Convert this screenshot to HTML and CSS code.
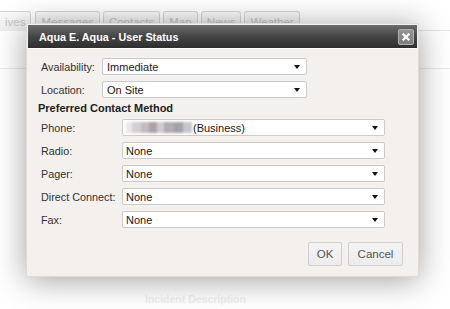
FILE: index.html
```html
<!DOCTYPE html>
<html>
<head>
<meta charset="utf-8">
<link rel="stylesheet" href="styles.css">
</head>
<body>
<div class="page">
  <div class="tabs">
    <div class="tab tab-first">ives</div>
    <div class="tab">Messages</div>
    <div class="tab">Contacts</div>
    <div class="tab">Map</div>
    <div class="tab">News</div>
    <div class="tab">Weather</div>
  </div>
  <div class="rule"></div>
  <div class="incident">Incident Description</div>

  <div class="dialog">
    <div class="titlebar">
      <span class="title">Aqua E. Aqua - User Status</span>
      <span class="close">
        <svg width="10" height="10" viewBox="0 0 10 10"><path d="M2.5 2.5 L7.5 7.5 M7.5 2.5 L2.5 7.5" stroke="#fff" stroke-width="2.2" stroke-linecap="square"/></svg>
      </span>
    </div>
    <div class="body">
      <div class="row row-top">
        <span class="label">Availability:</span>
        <div class="select sel-top"><span>Immediate</span></div>
      </div>
      <div class="row row-top">
        <span class="label">Location:</span>
        <div class="select sel-top"><span>On Site</span></div>
      </div>
      <div class="heading">Preferred Contact Method</div>
      <div class="row row-contact">
        <span class="label">Phone:</span>
        <div class="select sel-contact">
          <span class="blur">
            <i class="b1"></i><i class="b2"></i><i class="b3"></i><i class="b4"></i><i class="b5"></i><i class="b6"></i><i class="b7"></i><i class="b8"></i>
          </span><span class="phone-type">(Business)</span>
        </div>
      </div>
      <div class="row row-contact">
        <span class="label">Radio:</span>
        <div class="select sel-contact"><span>None</span></div>
      </div>
      <div class="row row-contact">
        <span class="label">Pager:</span>
        <div class="select sel-contact"><span>None</span></div>
      </div>
      <div class="row row-contact">
        <span class="label">Direct Connect:</span>
        <div class="select sel-contact"><span>None</span></div>
      </div>
      <div class="row row-contact">
        <span class="label">Fax:</span>
        <div class="select sel-contact"><span>None</span></div>
      </div>
      <div class="buttons">
        <div class="btn btn-ok">OK</div>
        <div class="btn btn-cancel">Cancel</div>
      </div>
    </div>
  </div>
</div>
</body>
</html>
```

FILE: styles.css
```css
* { box-sizing: border-box; }
html, body {
  margin: 0;
  padding: 0;
  background: #ffffff;
}
body {
  font-family: "Liberation Sans", Arial, sans-serif;
  width: 450px;
  height: 309px;
  overflow: hidden;
}
.page {
  position: relative;
  width: 450px;
  height: 309px;
  overflow: hidden;
}

/* faded background content */
.tabs {
  display: flex;
  gap: 3px;
  padding-top: 11px;
  margin-left: -14px;
  height: 31px;
  border-bottom: 1px solid #e6e6e6;
}
.tab {
  height: 20px;
  padding: 4px 5px 0;
  border: 1px solid #d6d6d6;
  border-bottom: none;
  border-radius: 3px 3px 0 0;
  background: linear-gradient(#fafafa, #eeeeee);
  color: #c4c4c4;
  font-size: 11.5px;
}
.tab-first { padding-left: 18px; margin-right: 1px; }
.rule {
  margin-top: 37px;
  height: 1px;
  background: #ebebeb;
}
.incident {
  margin: 224px 0 0 145px;
  font-size: 10.5px;
  font-weight: bold;
  color: #f0f0f0;
}

/* dialog */
.dialog {
  position: absolute;
  left: 26px;
  top: 23px;
  width: 393px;
  height: 254px;
  background: #f3f0ed;
  border: 1px solid #dedad6;
  padding: 1px;
  box-shadow: 0 3px 30px rgba(0, 0, 0, 0.38);
}
.titlebar {
  height: 24px;
  display: flex;
  align-items: center;
  justify-content: space-between;
  padding: 0 3px 0 11px;
  background: linear-gradient(#6c6c6c, #454545 50%, #2e2e2e);
  border-bottom: 1px solid #ffffff;
}
.title {
  color: #ffffff;
  font-weight: bold;
  font-size: 10.8px;
}
.close {
  width: 16px;
  height: 16px;
  display: flex;
  align-items: center;
  justify-content: center;
  background: linear-gradient(#959595, #7e7e7e);
  border: 1px solid #b0b0b0;
  border-radius: 2px;
}
.close svg { display: block; }

.body {
  display: flex;
  flex-direction: column;
  padding: 9px 14px 0 13px;
  color: #333;
  font-size: 11px;
}
.row {
  display: flex;
  align-items: center;
  height: 17px;
  margin-bottom: 6px;
}
.label {
  color: #333;
  font-size: 10.8px;
}
.row-top .label { width: 61px; }
.row-contact .label { width: 81px; }
.select {
  position: relative;
  height: 17px;
  display: flex;
  align-items: center;
  padding-left: 4px;
  background: #ffffff;
  border: 1px solid #cbcbcb;
  border-radius: 2px;
  color: #1e1414;
  font-size: 11px;
}
.select::after {
  content: "";
  position: absolute;
  right: 6px;
  top: 6px;
  border-left: 3px solid transparent;
  border-right: 3px solid transparent;
  border-top: 4px solid #111;
}
.sel-top { width: 205px; }
.sel-contact { width: 263px; padding-left: 3px; }

.heading {
  margin: -2px 0 3px -3px;
  height: 14px;
  font-weight: bold;
  font-size: 11px;
  color: #222;
}

.blur {
  display: flex;
  height: 11px;
  width: 66px;
  filter: blur(0.8px);
}
.blur i { display: block; height: 11px; }
.b1 { width: 6px; background: #e8e8e8; }
.b2 { width: 9px; background: #d4ced2; }
.b3 { width: 8px; background: #c4bcc0; }
.b4 { width: 8px; background: #aaa2a8; }
.b5 { width: 7px; background: #d0ccce; }
.b6 { width: 10px; background: #b0adb3; }
.b7 { width: 9px; background: #a5a3aa; }
.b8 { width: 9px; background: #c8c6cb; }
.phone-type { margin-left: 1px; }

.buttons {
  display: flex;
  justify-content: flex-end;
  gap: 6px;
  margin-top: 8px;
}
.btn {
  height: 24px;
  display: flex;
  align-items: center;
  justify-content: center;
  border: 1px solid #cfcfcf;
  border-radius: 2px;
  background: linear-gradient(#f4f4f4, #ececec);
  color: #555;
  font-size: 11.5px;
}
.btn-ok { width: 34px; }
.btn-cancel { width: 55px; }
```
